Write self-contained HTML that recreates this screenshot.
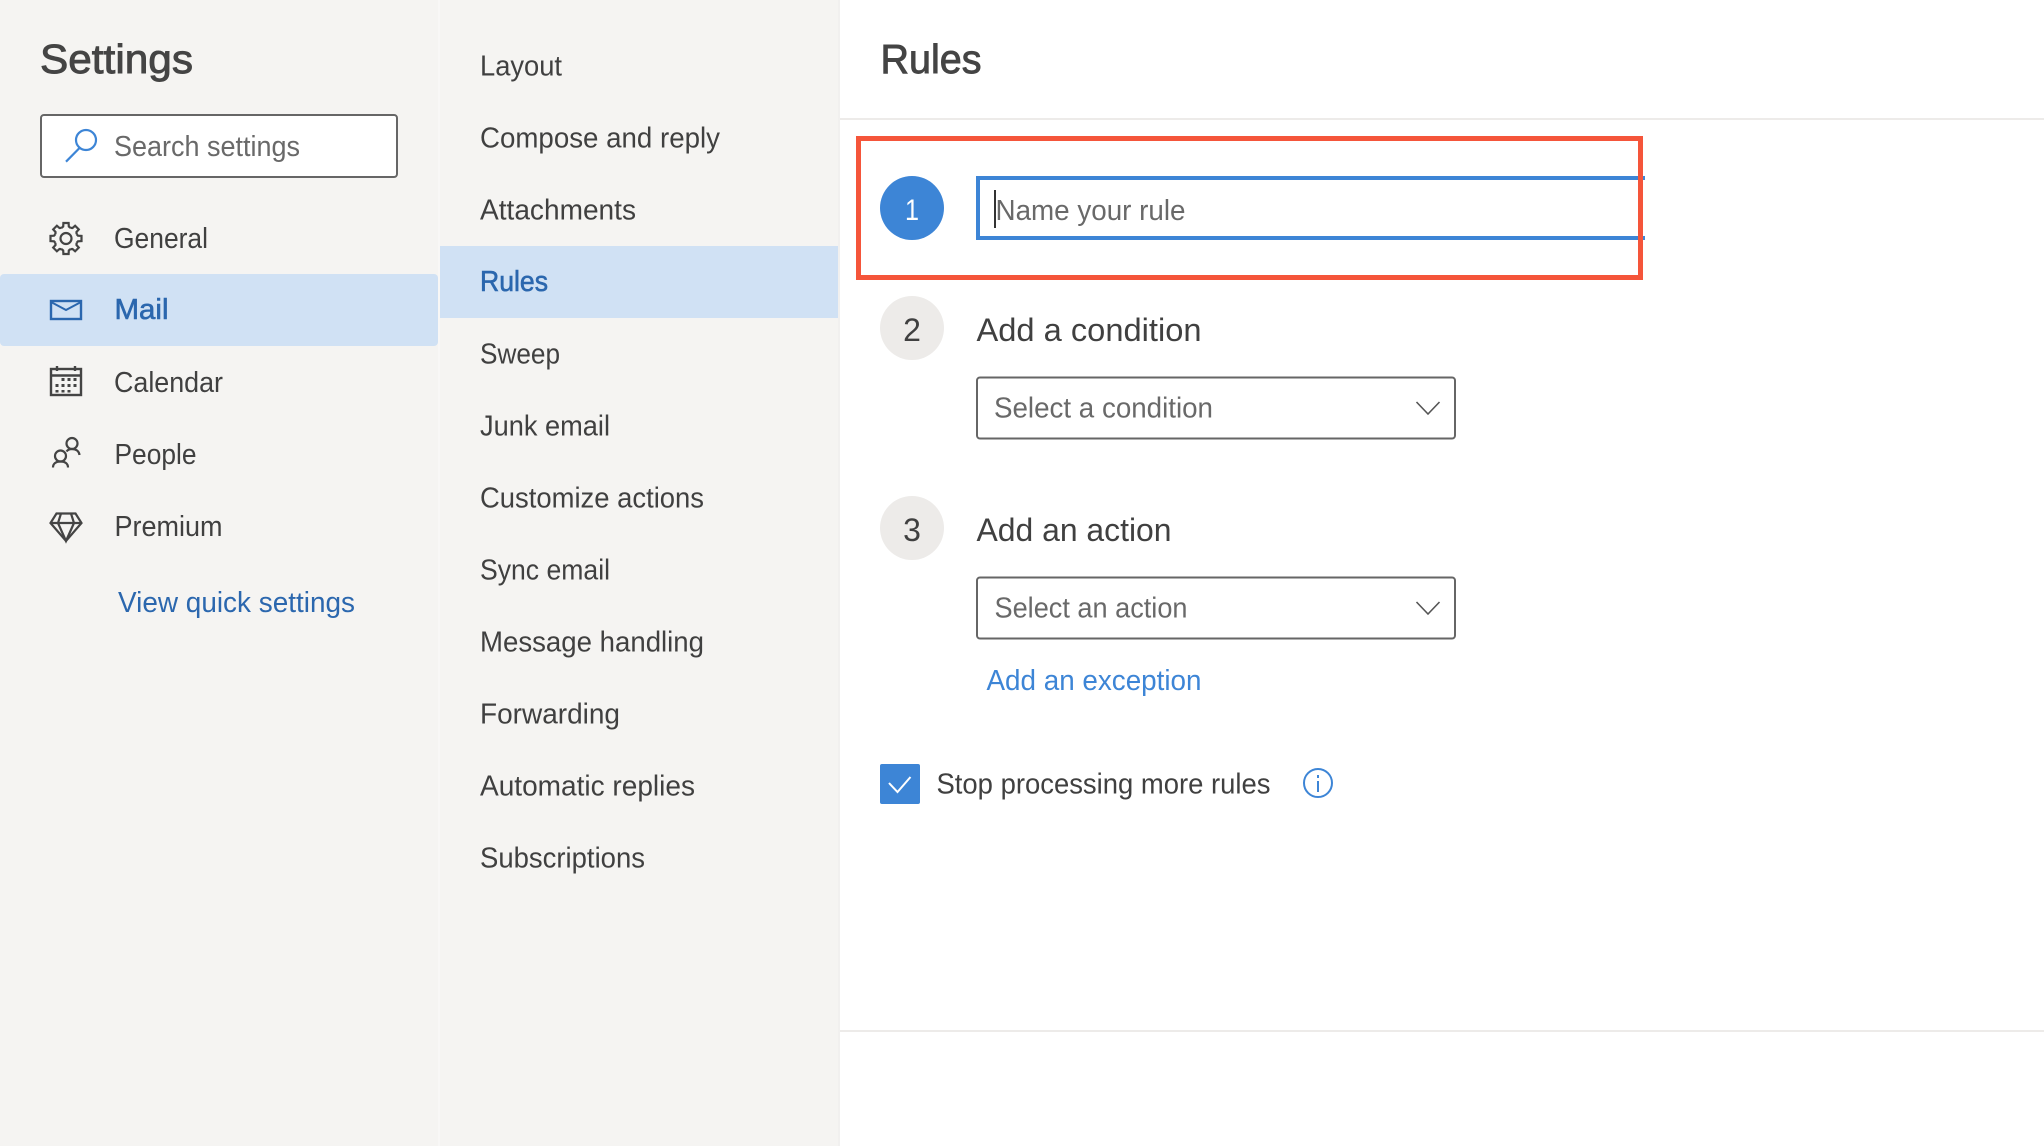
<!DOCTYPE html>
<html lang="en">
<head>
<meta charset="utf-8">
<title>Settings - Rules</title>
<style>
html,body{margin:0;padding:0;background:#fff;width:2044px;height:1146px;overflow:hidden}
svg{display:block}
text{font-family:"Liberation Sans",sans-serif;font-size:29px;fill:#404040}
.ph{fill:#696969}
.sb{fill:#2b67ae;stroke:#2b67ae;stroke-width:.6px;font-size:29px}
.h{font-size:41px;fill:#444;stroke:#444;stroke-width:.9px}
.st{font-size:32px}
.ic{fill:none;stroke:#444;stroke-width:2.2}
</style>
</head>
<body>
<svg width="2044" height="1146" viewBox="0 0 2044 1146" xmlns="http://www.w3.org/2000/svg">
<rect width="2044" height="1146" fill="#fff"/>
<rect x="0" y="0" width="838" height="1146" fill="#f5f4f2"/>
<rect x="438" y="0" width="2" height="1146" fill="#f8f7f6"/>
<rect x="838" y="0" width="2" height="1146" fill="#f1f0ef"/>

<!-- left nav -->
<text class="h" x="40" y="73" textLength="153" lengthAdjust="spacingAndGlyphs">Settings</text>
<rect x="41" y="115" width="356" height="62" rx="3" fill="#fff" stroke="#666" stroke-width="2"/>
<circle cx="86" cy="140" r="10" fill="none" stroke="#3d85d6" stroke-width="2.2"/>
<path d="M79.500 148 L66 161.700" fill="none" stroke="#3d85d6" stroke-width="2.2"/>
<text class="ph" x="114" y="156" textLength="186" lengthAdjust="spacingAndGlyphs">Search settings</text>

<rect x="0" y="274" width="438" height="72" rx="4" fill="#d0e1f4"/>

<g class="ic">
<polyline points="-4.4,-10.6 -2.8,-12 -2.6,-15.5 2.6,-15.5 2.8,-12 4.4,-10.6" transform="translate(66 238.5) rotate(0)"/>
<polyline points="-4.4,-10.6 -2.8,-12 -2.6,-15.5 2.6,-15.5 2.8,-12 4.4,-10.6" transform="translate(66 238.5) rotate(45)"/>
<polyline points="-4.4,-10.6 -2.8,-12 -2.6,-15.5 2.6,-15.5 2.8,-12 4.4,-10.6" transform="translate(66 238.5) rotate(90)"/>
<polyline points="-4.4,-10.6 -2.8,-12 -2.6,-15.5 2.6,-15.5 2.8,-12 4.4,-10.6" transform="translate(66 238.5) rotate(135)"/>
<polyline points="-4.4,-10.6 -2.8,-12 -2.6,-15.5 2.6,-15.5 2.8,-12 4.4,-10.6" transform="translate(66 238.5) rotate(180)"/>
<polyline points="-4.4,-10.6 -2.8,-12 -2.6,-15.5 2.6,-15.5 2.8,-12 4.4,-10.6" transform="translate(66 238.5) rotate(225)"/>
<polyline points="-4.4,-10.6 -2.8,-12 -2.6,-15.5 2.6,-15.5 2.8,-12 4.4,-10.6" transform="translate(66 238.5) rotate(270)"/>
<polyline points="-4.4,-10.6 -2.8,-12 -2.6,-15.5 2.6,-15.5 2.8,-12 4.4,-10.6" transform="translate(66 238.5) rotate(315)"/>
<circle cx="66" cy="238.5" r="5.5"/>
</g>
<text x="114" y="248" textLength="94" lengthAdjust="spacingAndGlyphs">General</text>

<rect x="51" y="301" width="30" height="18" fill="none" stroke="#2b67ae" stroke-width="2.400"/>
<path d="M51 302 L66 310 L81 302" fill="none" stroke="#2b67ae" stroke-width="2"/>
<text class="sb" x="114.500" y="319" textLength="54" lengthAdjust="spacingAndGlyphs">Mail</text>

<g>
<rect x="51" y="369" width="30" height="26" fill="none" stroke="#444" stroke-width="2.400"/>
<path d="M50 375.500 H82 M57 366 V371 M75 366 V371" fill="none" stroke="#444" stroke-width="2.400"/>
<path d="M61.500 378h3v3h-3zM67.500 378h3v3h-3zM73.500 378h3v3h-3zM55.500 384h3v3h-3zM61.500 384h3v3h-3zM67.500 384h3v3h-3zM73.500 384h3v3h-3zM55.500 390h3v2.500h-3zM61.500 390h3v2.500h-3zM67.500 390h3v2.500h-3z" fill="#444"/>
</g>
<text x="114" y="392" textLength="109" lengthAdjust="spacingAndGlyphs">Calendar</text>

<g class="ic">
<circle cx="72" cy="443.500" r="5.500"/>
<circle cx="60.500" cy="456" r="5.500"/>
<path d="M53 467.500 C53 463.500 56 461.500 60.500 461.500 C65 461.500 68 463.500 68 467.500"/>
<path d="M66.500 451.500 C68 449.500 70 449 72 449 C76 449 79 451 79.500 455"/>
</g>
<text x="114.500" y="464" textLength="82" lengthAdjust="spacingAndGlyphs">People</text>

<g class="ic">
<path d="M56.500 513.500 H75.500 L81.500 523 L66 541 L50.500 523 Z"/>
<path d="M50.500 523 H81.500 M61 513.500 L58 523 L66 541 L74 523 L71 513.500"/>
</g>
<text x="114.500" y="536" textLength="108" lengthAdjust="spacingAndGlyphs">Premium</text>

<text x="118" y="612" textLength="237" lengthAdjust="spacingAndGlyphs" style="fill:#2b67ae">View quick settings</text>

<!-- middle nav -->
<rect x="440" y="246" width="398" height="72" fill="#d0e1f4"/>
<text x="480" y="75.500" textLength="82" lengthAdjust="spacingAndGlyphs">Layout</text>
<text x="480" y="147.500" textLength="240" lengthAdjust="spacingAndGlyphs">Compose and reply</text>
<text x="480" y="219.500" textLength="156" lengthAdjust="spacingAndGlyphs">Attachments</text>
<text class="sb" x="480" y="291" textLength="68" lengthAdjust="spacingAndGlyphs">Rules</text>
<text x="480" y="363.500" textLength="80" lengthAdjust="spacingAndGlyphs">Sweep</text>
<text x="480" y="435.500" textLength="130" lengthAdjust="spacingAndGlyphs">Junk email</text>
<text x="480" y="507.500" textLength="224" lengthAdjust="spacingAndGlyphs">Customize actions</text>
<text x="480" y="579.500" textLength="130" lengthAdjust="spacingAndGlyphs">Sync email</text>
<text x="480" y="651.500" textLength="224" lengthAdjust="spacingAndGlyphs">Message handling</text>
<text x="480" y="723.500" textLength="140" lengthAdjust="spacingAndGlyphs">Forwarding</text>
<text x="480" y="795.500" textLength="215" lengthAdjust="spacingAndGlyphs">Automatic replies</text>
<text x="480" y="867.500" textLength="165" lengthAdjust="spacingAndGlyphs">Subscriptions</text>

<!-- right pane -->
<text class="h" x="880.500" y="73" textLength="101" lengthAdjust="spacingAndGlyphs">Rules</text>
<rect x="840" y="118" width="1204" height="2" fill="#edebe9"/>
<rect x="840" y="1030" width="1204" height="2" fill="#edebe9"/>

<!-- step 1 -->
<circle cx="912" cy="208" r="32" fill="#3d85d6"/>
<text x="912" y="220" text-anchor="middle" style="fill:#fff;font-size:30px" textLength="14" lengthAdjust="spacingAndGlyphs">1</text>
<path d="M1645 178 H978 V238 H1645" fill="none" stroke="#3d85d6" stroke-width="4"/>
<rect x="994" y="190" width="2" height="38" fill="#333"/>
<text class="ph" x="995.500" y="220" textLength="190" lengthAdjust="spacingAndGlyphs">Name your rule</text>
<rect x="858.500" y="138.500" width="782" height="139" fill="none" stroke="#f5553a" stroke-width="5"/>

<!-- step 2 -->
<circle cx="912" cy="328" r="32" fill="#edebe9"/>
<text x="912" y="341" text-anchor="middle" class="st">2</text>
<text class="st" x="976.500" y="341" textLength="225" lengthAdjust="spacingAndGlyphs">Add a condition</text>
<rect x="977" y="377.500" width="478" height="61" rx="3" fill="#fff" stroke="#666" stroke-width="2"/>
<text class="ph" x="994" y="417.500" textLength="219" lengthAdjust="spacingAndGlyphs">Select a condition</text>
<path d="M1416.500 402 L1428 414 L1439.500 402" fill="none" stroke="#555" stroke-width="1.600"/>

<!-- step 3 -->
<circle cx="912" cy="528" r="32" fill="#edebe9"/>
<text x="912" y="541" text-anchor="middle" class="st">3</text>
<text class="st" x="976.500" y="541" textLength="195" lengthAdjust="spacingAndGlyphs">Add an action</text>
<rect x="977" y="577.500" width="478" height="61" rx="3" fill="#fff" stroke="#666" stroke-width="2"/>
<text class="ph" x="994.500" y="617.500" textLength="193" lengthAdjust="spacingAndGlyphs">Select an action</text>
<path d="M1416.500 602 L1428 614 L1439.500 602" fill="none" stroke="#555" stroke-width="1.600"/>

<text x="986.500" y="690" textLength="215" lengthAdjust="spacingAndGlyphs" style="fill:#3d85d6">Add an exception</text>

<!-- checkbox -->
<rect x="880" y="764" width="40" height="40" rx="2" fill="#3d85d6"/>
<path d="M889 783 L897.500 792 L910.500 777" fill="none" stroke="#fff" stroke-width="2"/>
<text x="936.500" y="793.500" textLength="334" lengthAdjust="spacingAndGlyphs">Stop processing more rules</text>
<circle cx="1318" cy="783" r="14" fill="none" stroke="#3d85d6" stroke-width="2"/>
<path d="M1318 781 V792 M1318 775 V778" fill="none" stroke="#3d85d6" stroke-width="2"/>
</svg>
</body>
</html>
